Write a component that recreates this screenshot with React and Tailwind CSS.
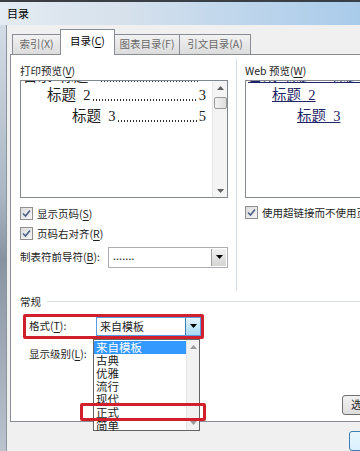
import React from 'react';

const UI = { fontFamily: '"Noto Sans CJK SC", "Liberation Sans", sans-serif' };
const PREVIEW = { fontFamily: '"Liberation Serif", "Noto Sans CJK SC", serif' };

const Check = () => (
  <span className="w-[13px] h-[13px] shrink-0 border border-[#8f8f8f] bg-[linear-gradient(135deg,#dcdcdc,#f6f6f6)] flex items-center justify-center">
    <svg width="9" height="9" viewBox="0 0 9 9">
      <path d="M1 4.5 L3.5 7 L8 1.5" fill="none" stroke="#4c5f86" strokeWidth="1.6" />
    </svg>
  </span>
);

const Arrow = ({ up, color = '#000' }) => (
  <svg width="7" height="4" viewBox="0 0 7 4">
    <path d={up ? 'M0 4 L3.5 0 L7 4 Z' : 'M0 0 L7 0 L3.5 4 Z'} fill={color} />
  </svg>
);

const DropBtn = ({ hot }) => (
  <span
    className={
      'w-[15px] h-full shrink-0 border-l flex items-center justify-center ' +
      (hot
        ? 'border-[#3c7fb1] bg-[linear-gradient(#e5f4fc,#a7d9f5)]'
        : 'border-[#a0a0a0] bg-[linear-gradient(#f2f2f2,#d4d4d4)]')
    }
  >
    <Arrow />
  </span>
);

const U = ({ children }) => <span className="underline underline-offset-2">{children}</span>;

// tab leader dots drawn as a dotted strip
const Leader = () => (
  <span className="flex-1 h-[2px] self-end mb-[5px] mx-[1px] bg-[radial-gradient(circle,#333_0.8px,transparent_1px)] bg-[length:3px_2px]" />
);

const PrintLine = ({ indent, title, page, className = '' }) => (
  <div className={'flex items-center h-[21px] text-[14.5px] leading-none text-[#222] ' + className} style={{ paddingLeft: indent }}>
    <span className="whitespace-pre">{title}</span>
    <Leader />
    <span className="pr-[6px]">{page}</span>
  </div>
);

export default function App() {
  const items = ['来自模板', '古典', '优雅', '流行', '现代', '正式', '简单'];

  return (
    <div className="relative w-[360px] h-[451px] overflow-hidden bg-[#f0f0f0] text-[10.5px] leading-none whitespace-nowrap text-[#1e1e1e]" style={UI}>
      {/* title bar */}
      <div className="h-[25px] border-t-2 border-[#3a3f45] bg-[linear-gradient(90deg,#e4ebf2_0%,#d6e1ec_35%,#c3d8ec_60%,#a9cbea_100%)] flex items-center pl-[7px] text-[11px] text-black">
        目录
      </div>

      <div className="flex h-[426px]">
        {/* window frame */}
        <div className="w-[7px] shrink-0 bg-[linear-gradient(#d2dce6,#aab6c2_40%,#8893a0_55%,#b9c4cf)] border-r border-[#8c949c]" />

        <div className="flex-1 flex flex-col">
          {/* tabs */}
          <div className="h-[30px] flex items-end pl-[5px] relative z-10">
            <div className="h-[20px] w-[49px] mb-[1px] border border-b-0 border-[#898c95] bg-[linear-gradient(#f2f2f2,#dcdcdc)] flex items-center justify-center text-[#6a6a6a]">
              索引(X)
            </div>
            <div className="h-[26px] w-[55px] -ml-[1px] border border-b-0 border-[#898c95] bg-white flex items-center justify-center text-black pb-[3px]">
              目录(<U>C</U>)
            </div>
            <div className="h-[20px] w-[66px] mb-[1px] -ml-[1px] border border-b-0 border-[#898c95] bg-[linear-gradient(#f2f2f2,#dcdcdc)] flex items-center justify-center text-[#6a6a6a]">
              图表目录(F)
            </div>
            <div className="h-[20px] w-[72px] mb-[1px] -ml-[1px] border border-b-0 border-[#898c95] bg-[linear-gradient(#f2f2f2,#dcdcdc)] flex items-center justify-center text-[#6a6a6a]">
              引文目录(A)
            </div>
          </div>

          {/* panel */}
          <div className="ml-[3px] -mt-[1px] h-[371px] border border-r-0 border-[#898c95] bg-white flex flex-col">
            <div className="flex h-[236px]">
              {/* print preview */}
              <div className="ml-[9px] w-[208px] shrink-0 pt-[8px] flex flex-col">
                <div className="h-[16px] flex items-center mb-[1px]">打印预览(<U>V</U>)</div>
                <div className="h-[118px] border border-[#828790] flex overflow-hidden">
                  <div className="flex-1 overflow-hidden" style={PREVIEW}>
                    <PrintLine indent={2} title="目录  标题 1" page="1" className="-mt-[15px]" />
                    <PrintLine indent={26} title="标题  2" page="3" className="-mt-[2px]" />
                    <PrintLine indent={51} title="标题  3" page="5" />
                  </div>
                  <div className="w-[15px] shrink-0 bg-[#f4f4f4] border-l border-[#e6e6e6] flex flex-col items-center">
                    <div className="h-[15px] flex items-center justify-center"><Arrow up color="#606060" /></div>
                    <div className="w-[13px] h-[12px] mt-[1px] border border-[#9a9a9a] rounded-[2px] bg-[linear-gradient(90deg,#f3f3f3,#dedede)]" />
                    <div className="flex-1" />
                    <div className="h-[12px] flex items-center justify-center"><Arrow color="#606060" /></div>
                  </div>
                </div>
                <div className="mt-[7px] h-[18px] flex items-center gap-[4px]">
                  <Check />
                  <span>显示页码(<U>S</U>)</span>
                </div>
                <div className="mt-[2px] h-[18px] flex items-center gap-[4px]">
                  <Check />
                  <span>页码右对齐(<U>R</U>)</span>
                </div>
                <div className="mt-[4px] h-[21px] flex items-center">
                  <span className="w-[88px] shrink-0">制表符前导符(<U>B</U>):</span>
                  <div className="flex-1 h-full border border-[#abadb3] flex items-center">
                    <span className="flex-1 pl-[4px] text-[11px] -mt-[4px]">.......</span>
                    <div className="h-full p-[1px]"><DropBtn /></div>
                  </div>
                </div>
              </div>

              {/* separator */}
              <div className="ml-[8px] mt-[4px] w-px h-[232px] bg-[#d5dfe5]" />

              {/* web preview */}
              <div className="ml-[8px] flex-1 pt-[8px] flex flex-col overflow-hidden">
                <div className="h-[16px] flex items-center mb-[1px]">Web 预览(<U>W</U>)</div>
                <div className="h-[118px] border border-r-0 border-[#828790] overflow-hidden text-[14.5px] text-[#1f2566]" style={PREVIEW}>
                  <div className="h-[21px] -mt-[15px] pl-[2px] flex items-center"><span className="underline whitespace-pre">目录  标题 1  标题 1</span></div>
                  <div className="h-[21px] -mt-[2px] pl-[26px] flex items-center"><span className="underline whitespace-pre">标题  2</span></div>
                  <div className="h-[21px] pl-[51px] flex items-center"><span className="underline whitespace-pre">标题  3</span></div>
                </div>
                <div className="mt-[6px] h-[18px] flex items-center gap-[4px]">
                  <Check />
                  <span>使用超链接而不使用页码(<U>H</U>)</span>
                </div>
              </div>
            </div>

            {/* general */}
            <div className="mt-[3px] h-[16px] flex items-center pl-[9px]">
              <span>常规</span>
              <div className="flex-1 h-px bg-[#d5dfe5] ml-[6px]" />
            </div>
            <div className="mt-[4px] ml-[12px] w-[181px] h-[25px] border-[3px] border-[#d0202c] rounded-[2px] flex items-center pl-[3px]">
              <span className="w-[67px] shrink-0">格式(<U>T</U>):</span>
              <div className="w-[106px] h-[19px] border border-[#569de5] flex items-center bg-white">
                <span className="flex-1 pl-[3px] text-[11px]">来自模板</span>
                <DropBtn hot />
              </div>
            </div>
            <div className="mt-[7px] ml-[18px] h-[16px] flex items-center">显示级别(<U>L</U>):</div>
            <div className="mt-[33px] ml-[331px] w-[30px] h-[20px] border border-[#707070] rounded-[3px] bg-[linear-gradient(#f2f2f2,#dddddd)] flex items-center pl-[8px] text-[11px]">
              选
            </div>
          </div>

          {/* bottom strip */}
          <div className="flex-1 pt-[9px]">
            <div className="ml-[342px] w-[30px] h-[20px] border border-[#3c7fb1] rounded-[3px] bg-[linear-gradient(#eaf6fd,#d9f0fc)]" />
          </div>
        </div>
      </div>

      {/* open dropdown list */}
      <div className="absolute left-[93px] top-[339px] w-[107px] h-[92px] border border-[#646464] bg-white flex z-20">
        <div className="flex-1 pt-[1px]">
          {items.map((t, i) => (
            <div
              key={t}
              className={
                'h-[13px] flex items-center pl-[2px] text-[11.5px] ' +
                (i === 0 ? 'bg-[#3399ff] text-white' : 'text-[#222]')
              }
            >
              {t}
            </div>
          ))}
        </div>
        <div className="w-[13px] shrink-0 bg-[#f2f2f2] border-l border-[#e4e4e4] flex flex-col items-center justify-between py-[5px]">
          <Arrow up color="#9a9a9a" />
          <Arrow color="#9a9a9a" />
        </div>
      </div>

      {/* highlight box */}
      <div className="absolute left-[80px] top-[403px] w-[126px] h-[18px] border-[3px] border-[#d0202c] rounded-[2px] z-30" />
    </div>
  );
}
